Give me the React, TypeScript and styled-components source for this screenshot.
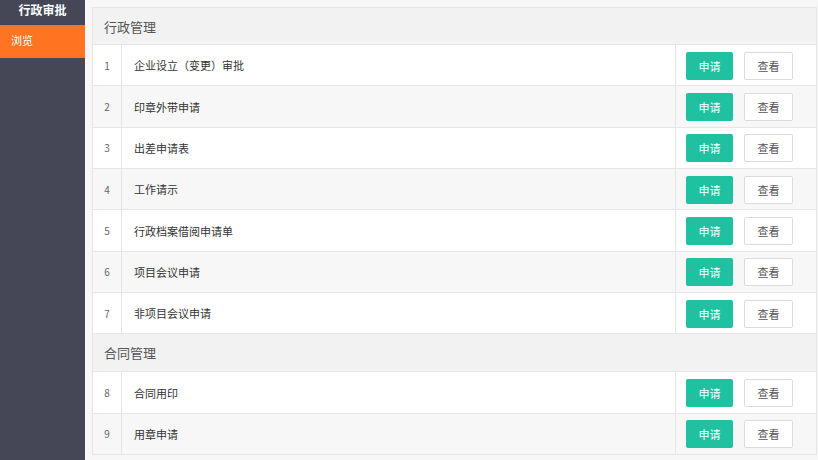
import React from 'react';
import styled, { createGlobalStyle } from 'styled-components';

type ItemType = {
    no: number;
    name: string;
};

type GroupType = {
    title: string;
    items: ItemType[];
};

const groups: GroupType[] = [
    {
        title: '行政管理',
        items: [
            { no: 1, name: '企业设立（变更）审批' },
            { no: 2, name: '印章外带申请' },
            { no: 3, name: '出差申请表' },
            { no: 4, name: '工作请示' },
            { no: 5, name: '行政档案借阅申请单' },
            { no: 6, name: '项目会议申请' },
            { no: 7, name: '非项目会议申请' },
        ],
    },
    {
        title: '合同管理',
        items: [
            { no: 8, name: '合同用印' },
            { no: 9, name: '用章申请' },
        ],
    },
];

const GlobalStyle = createGlobalStyle`
  html, body {
    margin: 0;
    padding: 0;
    font-family: "Noto Sans CJK SC", "Noto Sans", "Liberation Sans", sans-serif;
  }
`;

export default function App() {
    return (
        <Page>
            <GlobalStyle />
            <Sidebar>
                <SideTitle>行政审批</SideTitle>
                <SideItem $active>浏览</SideItem>
            </Sidebar>
            <Main>
                <Table>
                    <colgroup>
                        <col style={{ width: 29 }} />
                        <col />
                        <col style={{ width: 141 }} />
                    </colgroup>
                    <tbody>
                        {groups.map((g, gi) => (
                            <React.Fragment key={g.title}>
                                <tr>
                                    <GroupCell colSpan={3} $first={gi === 0}>{g.title}</GroupCell>
                                </tr>
                                {g.items.map((it, i) => (
                                    <Row key={it.no} $striped={i % 2 === 1}>
                                        <NoCell>{it.no}</NoCell>
                                        <NameCell>{it.name}</NameCell>
                                        <ActionCell>
                                            <ApplyButton>申请</ApplyButton>
                                            <ViewButton>查看</ViewButton>
                                        </ActionCell>
                                    </Row>
                                ))}
                            </React.Fragment>
                        ))}
                    </tbody>
                </Table>
            </Main>
        </Page>
    );
}

const Page = styled.div`
  display: flex;
  width: 818px;
  height: 460px;
  overflow: hidden;
`;

const Sidebar = styled.div`
  width: 85px;
  flex-shrink: 0;
  background-color: #454757;
`;

const SideTitle = styled.div`
  height: 25px;
  line-height: 19px;
  text-align: center;
  color: #ffffff;
  font-size: 12px;
  font-weight: bold;
`;

const SideItem = styled.div<{ $active?: boolean }>`
  height: 33px;
  line-height: 31px;
  padding-left: 11px;
  font-size: 11px;
  color: #ffffff;
  background-color: ${(p) => (p.$active ? '#ff7420' : 'transparent')};
`;

const Main = styled.div`
  flex: 1;
  background-color: #f7f7f7;
  padding: 7px 1px 0 7px;
`;

const Table = styled.table`
  width: 725px;
  border-collapse: collapse;
  table-layout: fixed;
  background-color: #ffffff;
  border: 1px solid #e6e6e6;
`;

const GroupCell = styled.td<{ $first: boolean }>`
  height: ${(p) => (p.$first ? '36px' : '37px')};
  padding: 0 0 0 11px;
  background-color: #f2f2f2;
  color: #555555;
  font-size: 13px;
  border: 1px solid #e6e6e6;
`;

const Row = styled.tr<{ $striped: boolean }>`
  background-color: ${(p) => (p.$striped ? '#f7f7f7' : '#ffffff')};
`;

const Cell = styled.td`
  height: 40.35px;
  padding: 0;
  border: 1px solid #e6e6e6;
`;

const NoCell = styled(Cell)`
  text-align: center;
  font-size: 10px;
  color: #666666;
`;

const NameCell = styled(Cell)`
  padding-left: 12px;
  font-size: 11px;
  color: #333333;
`;

const ActionCell = styled(Cell)`
  padding-left: 10px;
  white-space: nowrap;
`;

const BaseButton = styled.button`
  height: 28px;
  padding: 0;
  font-size: 11px;
  font-family: inherit;
  border-radius: 2px;
  vertical-align: middle;
  cursor: pointer;
`;

const ApplyButton = styled(BaseButton)`
  width: 47px;
  border: none;
  background-color: #1fc1a1;
  color: #ffffff;
`;

const ViewButton = styled(BaseButton)`
  width: 49px;
  margin-left: 11px;
  border: 1px solid #dcdcdc;
  background-color: #ffffff;
  color: #555555;
`;
